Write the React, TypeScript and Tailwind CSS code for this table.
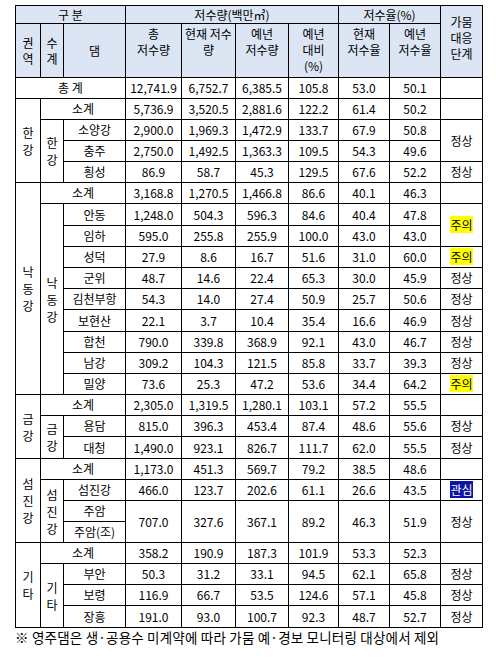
import React from "react"

type Dam = {
  name: string
  name2?: string
  v: string[]
  stage?: string
  span?: number
  covered?: boolean
  tall?: boolean
}

type Group = {
  region: string
  river: string
  total: string[]
  dams: Dam[]
}

const groups: Group[] = [
  {
    region: "한강",
    river: "한강",
    total: ["5,736.9", "3,520.5", "2,881.6", "122.2", "61.4", "50.2"],
    dams: [
      { name: "소양강", v: ["2,900.0", "1,969.3", "1,472.9", "133.7", "67.9", "50.8"], stage: "정상", span: 2 },
      { name: "충주", v: ["2,750.0", "1,492.5", "1,363.3", "109.5", "54.3", "49.6"], covered: true },
      { name: "횡성", v: ["86.9", "58.7", "45.3", "129.5", "67.6", "52.2"], stage: "정상" },
    ],
  },
  {
    region: "낙동강",
    river: "낙동강",
    total: ["3,168.8", "1,270.5", "1,466.8", "86.6", "40.1", "46.3"],
    dams: [
      { name: "안동", v: ["1,248.0", "504.3", "596.3", "84.6", "40.4", "47.8"], stage: "주의", span: 2, tall: true },
      { name: "임하", v: ["595.0", "255.8", "255.9", "100.0", "43.0", "43.0"], covered: true },
      { name: "성덕", v: ["27.9", "8.6", "16.7", "51.6", "31.0", "60.0"], stage: "주의" },
      { name: "군위", v: ["48.7", "14.6", "22.4", "65.3", "30.0", "45.9"], stage: "정상" },
      { name: "김천부항", v: ["54.3", "14.0", "27.4", "50.9", "25.7", "50.6"], stage: "정상" },
      { name: "보현산", v: ["22.1", "3.7", "10.4", "35.4", "16.6", "46.9"], stage: "정상", tall: true },
      { name: "합천", v: ["790.0", "339.8", "368.9", "92.1", "43.0", "46.7"], stage: "정상" },
      { name: "남강", v: ["309.2", "104.3", "121.5", "85.8", "33.7", "39.3"], stage: "정상" },
      { name: "밀양", v: ["73.6", "25.3", "47.2", "53.6", "34.4", "64.2"], stage: "주의" },
    ],
  },
  {
    region: "금강",
    river: "금강",
    total: ["2,305.0", "1,319.5", "1,280.1", "103.1", "57.2", "55.5"],
    dams: [
      { name: "용담", v: ["815.0", "396.3", "453.4", "87.4", "48.6", "55.6"], stage: "정상" },
      { name: "대청", v: ["1,490.0", "923.1", "826.7", "111.7", "62.0", "55.5"], stage: "정상", tall: true },
    ],
  },
  {
    region: "섬진강",
    river: "섬진강",
    total: ["1,173.0", "451.3", "569.7", "79.2", "38.5", "48.6"],
    dams: [
      { name: "섬진강", v: ["466.0", "123.7", "202.6", "61.1", "26.6", "43.5"], stage: "관심" },
      { name: "주암", name2: "주암(조)", v: ["707.0", "327.6", "367.1", "89.2", "46.3", "51.9"], stage: "정상" },
    ],
  },
  {
    region: "기타",
    river: "기타",
    total: ["358.2", "190.9", "187.3", "101.9", "53.3", "52.3"],
    dams: [
      { name: "부안", v: ["50.3", "31.2", "33.1", "94.5", "62.1", "65.8"], stage: "정상" },
      { name: "보령", v: ["116.9", "66.7", "53.5", "124.6", "57.1", "45.8"], stage: "정상" },
      { name: "장흥", v: ["191.0", "93.0", "100.7", "92.3", "48.7", "52.7"], stage: "정상", tall: true },
    ],
  },
]

const td = "border border-black text-center align-middle p-0 leading-[14px]"
const th = "border border-black text-center p-0 bg-[#dbe5f3] font-normal"

function Vertical({ text }: { text: string }) {
  return (
    <div className="leading-[17px]">
      {text.split("").map((c, i) => (
        <div key={i}>{c}</div>
      ))}
    </div>
  )
}

function Stage({ s }: { s?: string }) {
  if (s === "주의") return <span className="bg-[#ffff00]">{s}</span>
  if (s === "관심") return <span className="bg-[#0a16a8] text-white">{s}</span>
  return <>{s}</>
}

function GroupRows({ g }: { g: Group }) {
  const damRows = g.dams.reduce((n, d) => n + (d.name2 ? 2 : 1), 0)
  const rows: React.ReactNode[] = []

  rows.push(
    <tr key="total" className="h-[21px]">
      <td rowSpan={damRows + 1} className={td}>
        <Vertical text={g.region} />
      </td>
      <td colSpan={2} className={td}>소계</td>
      {g.total.map((x, i) => (
        <td key={i} className={td}>{x}</td>
      ))}
      <td className={td}></td>
    </tr>
  )

  g.dams.forEach((d, idx) => {
    const span = d.name2 ? 2 : 1
    rows.push(
      <tr key={d.name} className={d.tall ? "h-[22px]" : "h-[21px]"}>
        {idx === 0 && (
          <td rowSpan={damRows} className={td}>
            <Vertical text={g.river} />
          </td>
        )}
        <td className={td}>{d.name}</td>
        {d.v.map((x, i) => (
          <td key={i} rowSpan={span} className={td}>{x}</td>
        ))}
        {!d.covered && (
          <td rowSpan={d.span ?? span} className={td}>
            <Stage s={d.stage} />
          </td>
        )}
      </tr>
    )
    if (d.name2) {
      rows.push(
        <tr key={d.name2} className="h-[21px]">
          <td className={td}>{d.name2}</td>
        </tr>
      )
    }
  })

  return <>{rows}</>
}

export default function App() {
  return (
    <div className="min-h-screen bg-white pl-[15px] pt-[5px] text-black font-['Noto_Sans_CJK_KR',sans-serif] text-[12px]">
      <table className="table-fixed border-collapse w-[467px]">
        <colgroup>
          <col className="w-[25px]" />
          <col className="w-[23px]" />
          <col className="w-[62px]" />
          <col className="w-[56px]" />
          <col className="w-[54px]" />
          <col className="w-[53px]" />
          <col className="w-[50px]" />
          <col className="w-[51px]" />
          <col className="w-[51px]" />
          <col className="w-[42px]" />
        </colgroup>
        <thead>
          <tr className="h-[18px]">
            <th colSpan={3} className={th + " leading-[14px]"}>구 분</th>
            <th colSpan={4} className={th + " leading-[14px]"}>저수량(백만㎥)</th>
            <th colSpan={2} className={th + " leading-[14px]"}>저수율(%)</th>
            <th rowSpan={2} className={th + " align-middle leading-[16px] pb-2"}>
              가뭄<br />대응<br />단계
            </th>
          </tr>
          <tr className="h-[54px]">
            <th className={th + " align-middle leading-[16px]"}>권<br />역</th>
            <th className={th + " align-middle leading-[16px]"}>수<br />계</th>
            <th className={th + " align-middle"}>댐</th>
            <th className={th + " align-top leading-[16px] pt-[2px]"}>총<br />저수량</th>
            <th className={th + " align-top leading-[16px] pt-[2px]"}>현재 저수<br />량</th>
            <th className={th + " align-top leading-[16px] pt-[2px]"}>예년<br />저수량</th>
            <th className={th + " align-top leading-[16px] pt-[2px]"}>예년<br />대비<br />(%)</th>
            <th className={th + " align-top leading-[16px] pt-[2px]"}>현재<br />저수율</th>
            <th className={th + " align-top leading-[16px] pt-[2px]"}>예년<br />저수율</th>
          </tr>
        </thead>
        <tbody>
          <tr className="h-[21px]">
            <td colSpan={3} className={td}>총 계</td>
            {["12,741.9", "6,752.7", "6,385.5", "105.8", "53.0", "50.1"].map((x, i) => (
              <td key={i} className={td}>{x}</td>
            ))}
            <td className={td}></td>
          </tr>
          {groups.map((g) => (
            <GroupRows key={g.region} g={g} />
          ))}
        </tbody>
      </table>
      <p className="text-[13.5px] leading-[16px] tracking-[0.2px] mt-[1px]">
        ※ 영주댐은 생·공용수 미계약에 따라 가뭄 예·경보 모니터링 대상에서 제외
      </p>
    </div>
  )
}
